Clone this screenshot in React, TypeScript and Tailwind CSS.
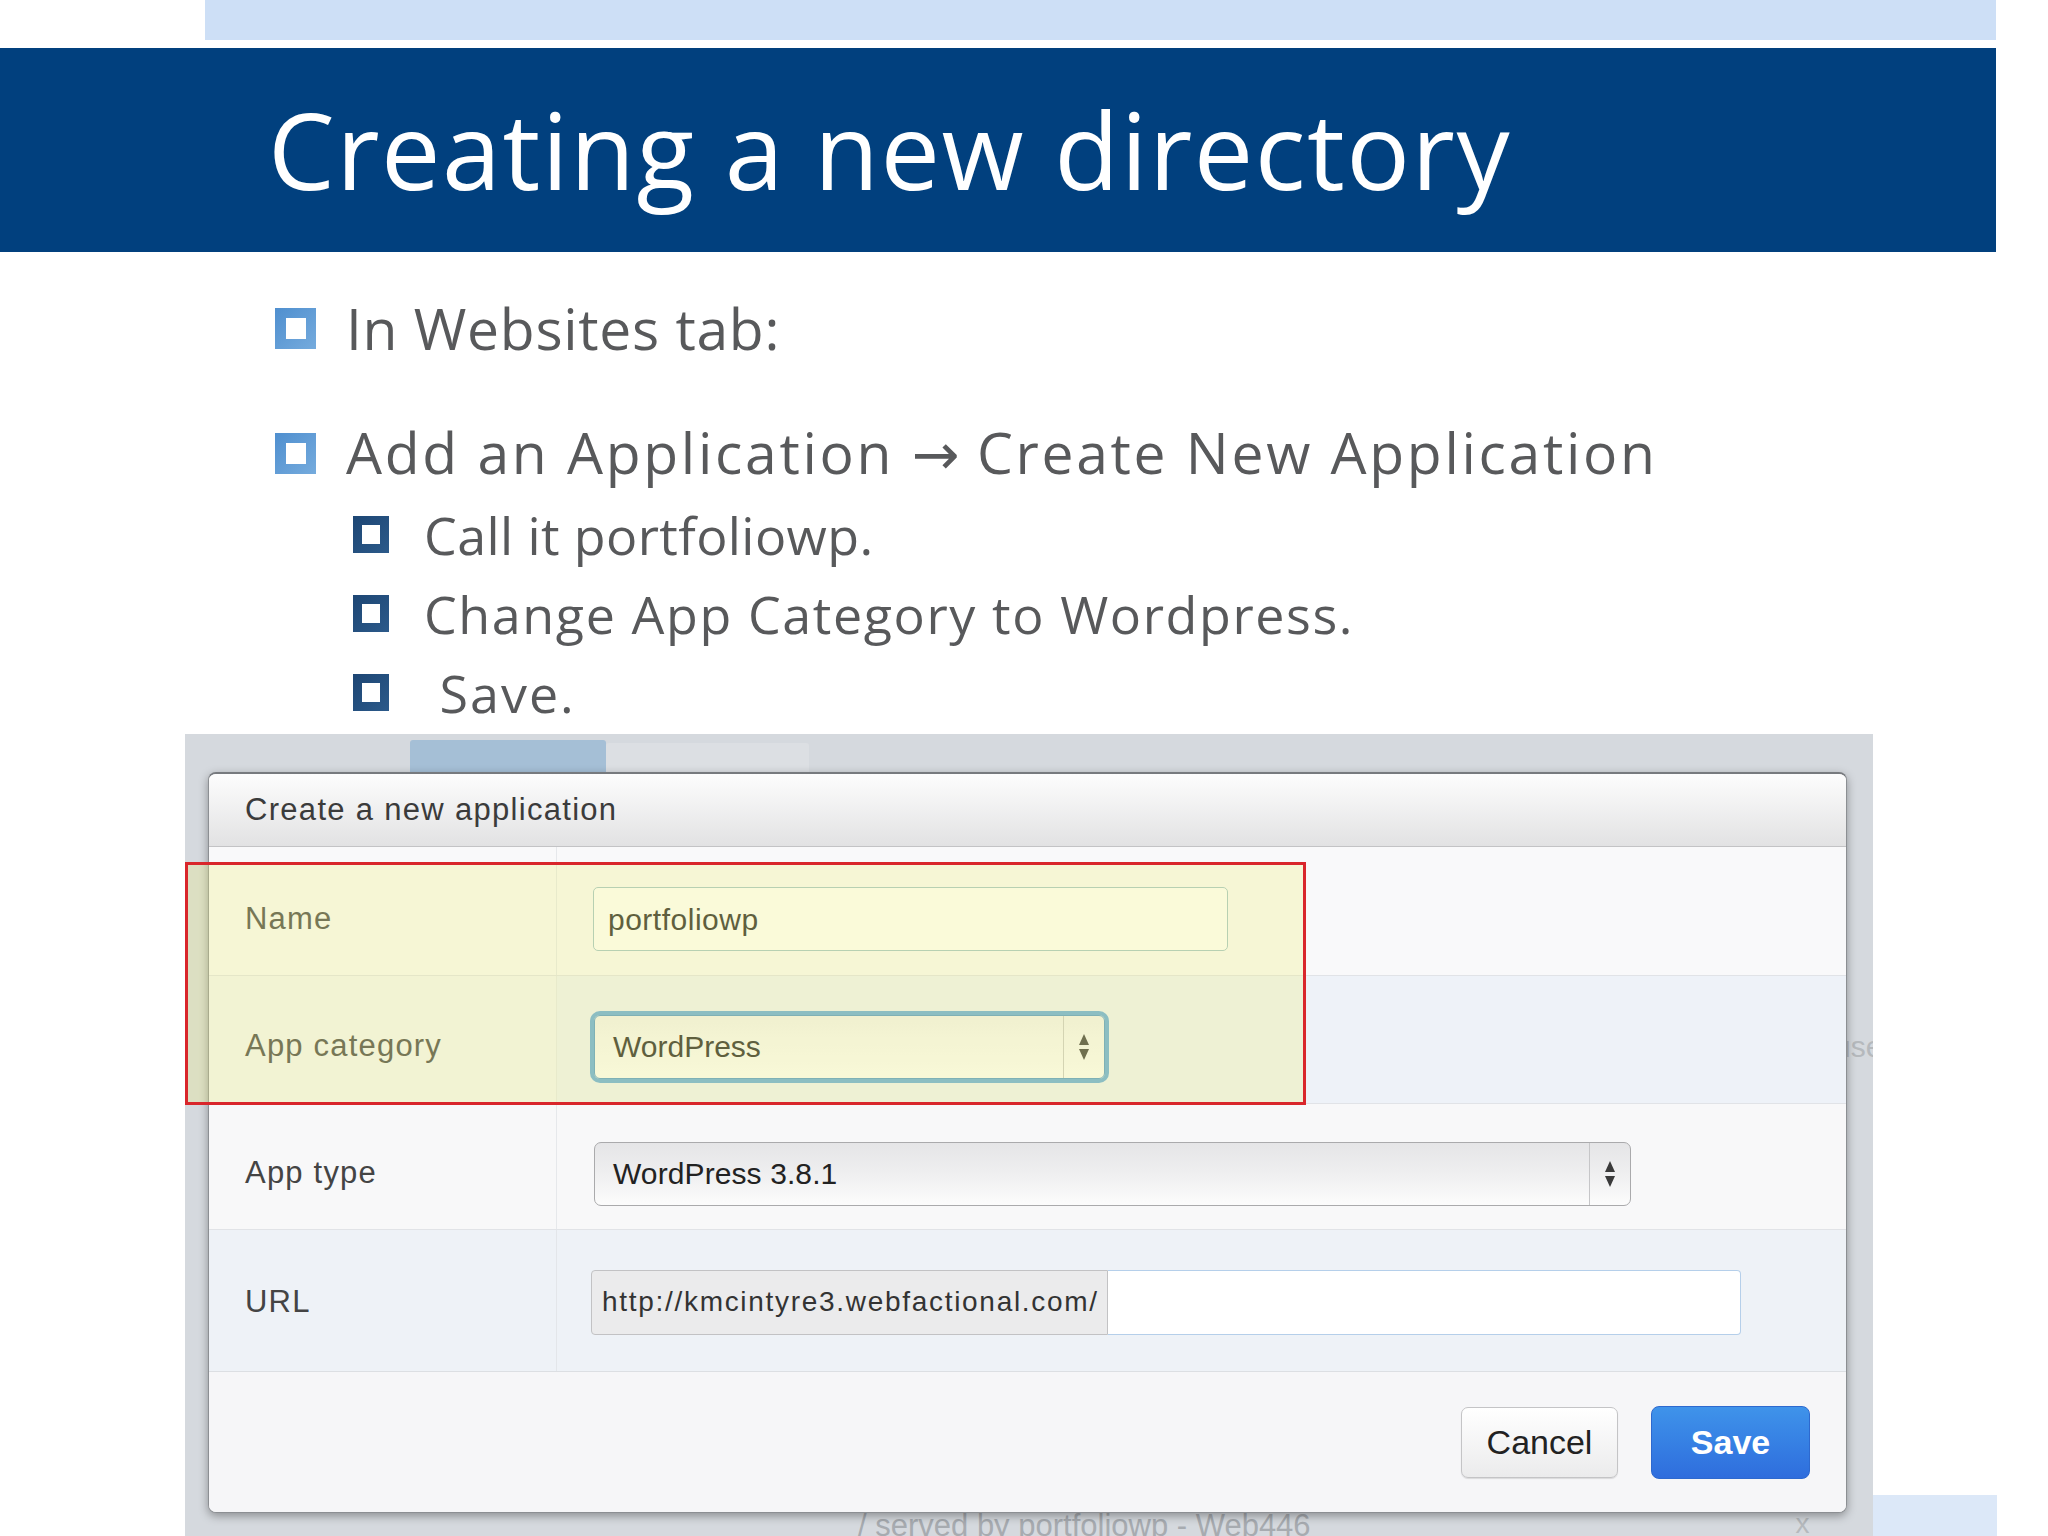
import React from "react";

function Arrows() {
  return (
    <svg width="10" height="26" viewBox="0 0 10 26" className="block">
      <polygon points="5,0 10,11 0,11" fill="#3a3a3a" />
      <polygon points="0,15 10,15 5,26" fill="#3a3a3a" />
    </svg>
  );
}

function MainBullet({ children, track }: { children: React.ReactNode; track: string }) {
  return (
    <div className="flex items-center h-[41px]">
      <div className="w-[41px] h-[41px] shrink-0 bg-gradient-to-br from-[#4f8fcf] to-[#75abdd] flex items-center justify-center">
        <div className="w-[20px] h-[21px] bg-white" />
      </div>
      <span className={`ml-[30px] text-[57px] leading-[41px] text-[#58595b] whitespace-nowrap ${track}`}>{children}</span>
    </div>
  );
}

function SubBullet({ children, track }: { children: React.ReactNode; track: string }) {
  return (
    <div className="flex items-center h-[37px] pl-[78px]">
      <div className="w-[36px] h-[37px] shrink-0 bg-gradient-to-br from-[#1d4674] to-[#2c5a8a] flex items-center justify-center">
        <div className="w-[18px] h-[19px] bg-white" />
      </div>
      <span className={`ml-[35px] text-[52px] leading-[37px] text-[#58595b] whitespace-nowrap ${track}`}>{children}</span>
    </div>
  );
}

export default function App() {
  const sans = "font-['Liberation_Sans',Arial,Helvetica,sans-serif]";
  return (
    <div className="w-[2048px] h-[1536px] bg-white overflow-hidden font-['Open_Sans',sans-serif]">
      <div className="ml-[205px] w-[1791px] h-[40px] bg-[#cddff6]" />
      <div className="mt-[8px] w-[1996px] h-[204px] bg-[#01407e] pl-[268px] pt-[48px]">
        <h1 className="text-white text-[106px] leading-none tracking-[1.5px] font-normal whitespace-nowrap">
          Creating a new directory
        </h1>
      </div>

      <div className="pl-[275px] pt-[56px]">
        <MainBullet track="tracking-[0.7px]">In Websites tab:</MainBullet>
        <div className="mt-[84px]">
          <MainBullet track="tracking-[2.7px]">
            Add an Application <span className="font-['DejaVu_Sans',sans-serif] tracking-normal">→</span> Create New Application
          </MainBullet>
        </div>
        <div className="mt-[42px] flex flex-col gap-[42px]">
          <SubBullet track="tracking-[0.4px]">Call it portfoliowp.</SubBullet>
          <SubBullet track="tracking-[1.6px]">Change App Category to Wordpress.</SubBullet>
          <SubBullet track="tracking-[2px]">{"\u00a0"}Save.</SubBullet>
        </div>
      </div>

      <div className="mt-[23px] ml-[185px] flex">
        <div className={`relative w-[1688px] h-[802px] bg-[#d5d9de] overflow-hidden ${sans}`}>
          {/* background tabs */}
          <div className="h-[38px] flex items-end pl-[225px]">
            <div className="w-[196px] h-[32px] bg-[#a5bfd6] rounded-t-[3px]" />
            <div className="w-[203px] h-[29px] bg-[#dcdfe3] rounded-t-[3px]" />
          </div>

          {/* underlying text peeking on the right */}
          <div className="absolute left-[1649px] top-[298px] text-[30px] leading-none text-[#b5b9bd]">use</div>

          {/* dialog */}
          <div className="relative z-10 ml-[23px] w-[1639px] h-[741px] rounded-[8px] border border-[#8c8f93] border-t-[2px] border-t-[#777a7e] shadow-[0_3px_10px_rgba(0,0,0,0.35)] bg-[#f6f6f8] overflow-hidden flex flex-col">
            <div className="h-[73px] shrink-0 flex items-center pl-[36px] bg-gradient-to-b from-[#fdfdfd] to-[#e2e2e3] border-b border-[#c3c3c5]">
              <span className="text-[31px] tracking-[1.3px] text-[#3b3b3b]">Create a new application</span>
            </div>

            {/* Name */}
            <div className="h-[129px] shrink-0 flex bg-[#f9f9fa] border-b border-[#e1e3e7]">
              <div className="w-[348px] shrink-0 border-r border-[#e6e8eb] flex items-center pl-[36px] pt-[16px]">
                <span className="text-[31px] tracking-[1.2px] text-[#444]">Name</span>
              </div>
              <div className="flex items-center pl-[36px] pt-[16px]">
                <div className="w-[635px] h-[64px] border-[1.5px] border-[#9fc3c8] rounded-[5px] bg-white flex items-center pl-[14px]">
                  <span className="text-[30px] tracking-[0.5px] text-[#222]">portfoliowp</span>
                </div>
              </div>
            </div>

            {/* App category */}
            <div className="h-[128px] shrink-0 flex bg-[#eef2f8] border-b border-[#e1e3e7]">
              <div className="w-[348px] shrink-0 border-r border-[#e6e8eb] bg-[#f4f5f6] flex items-center pl-[36px] pt-[14px]">
                <span className="text-[31px] tracking-[1.2px] text-[#444]">App category</span>
              </div>
              <div className="flex items-center pl-[37px] pt-[14px]">
                <div className="w-[511px] h-[64px] rounded-[6px] border border-[#4f97cc] shadow-[0_0_0_4px_#62a9df] bg-gradient-to-b from-[#f2f2f2] to-[#fdfdfd] flex">
                  <div className="flex-1 flex items-center pl-[18px]">
                    <span className="text-[30px] text-[#222]">WordPress</span>
                  </div>
                  <div className="w-[41px] border-l border-[#c9c9c9] flex items-center justify-center">
                    <Arrows />
                  </div>
                </div>
              </div>
            </div>

            {/* App type */}
            <div className="h-[126px] shrink-0 flex bg-[#f8f8f9] border-b border-[#e1e3e7]">
              <div className="w-[348px] shrink-0 border-r border-[#e6e8eb] flex items-center pl-[36px] pt-[14px]">
                <span className="text-[31px] tracking-[1.2px] text-[#444]">App type</span>
              </div>
              <div className="flex items-center pl-[37px] pt-[14px]">
                <div className="w-[1037px] h-[64px] rounded-[7px] border border-[#aaaaac] bg-gradient-to-b from-[#e5e5e7] via-[#efeff0] to-[#fcfcfc] flex">
                  <div className="flex-1 flex items-center pl-[18px]">
                    <span className="text-[30px] tracking-[0.1px] text-[#222]">WordPress 3.8.1</span>
                  </div>
                  <div className="w-[41px] border-l border-[#c6c6c8] flex items-center justify-center">
                    <Arrows />
                  </div>
                </div>
              </div>
            </div>

            {/* URL */}
            <div className="h-[142px] shrink-0 flex bg-[#eef2f7] border-b border-[#dcdfe3]">
              <div className="w-[348px] shrink-0 border-r border-[#e3e6ea] flex items-center pl-[36px] pt-[3px]">
                <span className="text-[31px] tracking-[1.2px] text-[#444]">URL</span>
              </div>
              <div className="flex items-center pl-[34px] pt-[3px]">
                <div className="w-[517px] h-[65px] bg-[#ebebec] border border-[#c2c2c4] rounded-l-[4px] flex items-center pl-[10px]">
                  <span className="text-[28px] tracking-[1.7px] text-[#333] whitespace-nowrap">http://kmcintyre3.webfactional.com/</span>
                </div>
                <div className="w-[633px] h-[65px] bg-white border border-l-0 border-[#b5cfea] rounded-r-[4px]" />
              </div>
            </div>

            {/* Footer */}
            <div className="flex-1 flex items-center justify-end pr-[36px] gap-[33px] bg-[#f6f6f8]">
              <div className="w-[157px] h-[71px] rounded-[7px] border border-[#c4c4c6] bg-gradient-to-b from-[#ffffff] to-[#ebebec] shadow-[0_1px_1px_rgba(0,0,0,0.12)] flex items-center justify-center">
                <span className="text-[34px] text-[#222]">Cancel</span>
              </div>
              <div className="w-[159px] h-[73px] rounded-[8px] border border-[#2d69cf] bg-gradient-to-b from-[#3f93ea] to-[#2f6ddd] flex items-center justify-center">
                <span className="text-[34px] font-bold text-white">Save</span>
              </div>
            </div>
          </div>

          {/* text below dialog */}
          <div className="-mt-[3px] ml-[673px] flex items-start">
            <span className="text-[31px] leading-none text-[#a7abb0] whitespace-nowrap">/ served by portfoliowp - Web446</span>
            <span className="ml-[485px] text-[28px] leading-none text-[#b5b9bd]">x</span>
          </div>

          {/* annotation highlight */}
          <div className="absolute z-20 left-0 top-[128px] w-[1121px] h-[243px] border-[3px] border-[#d9262b] bg-[rgba(240,240,130,0.3)]" />
        </div>
        <div className="w-[124px] flex flex-col justify-end">
          <div className="h-[41px] bg-[#dce8f8]" />
        </div>
      </div>
    </div>
  );
}
